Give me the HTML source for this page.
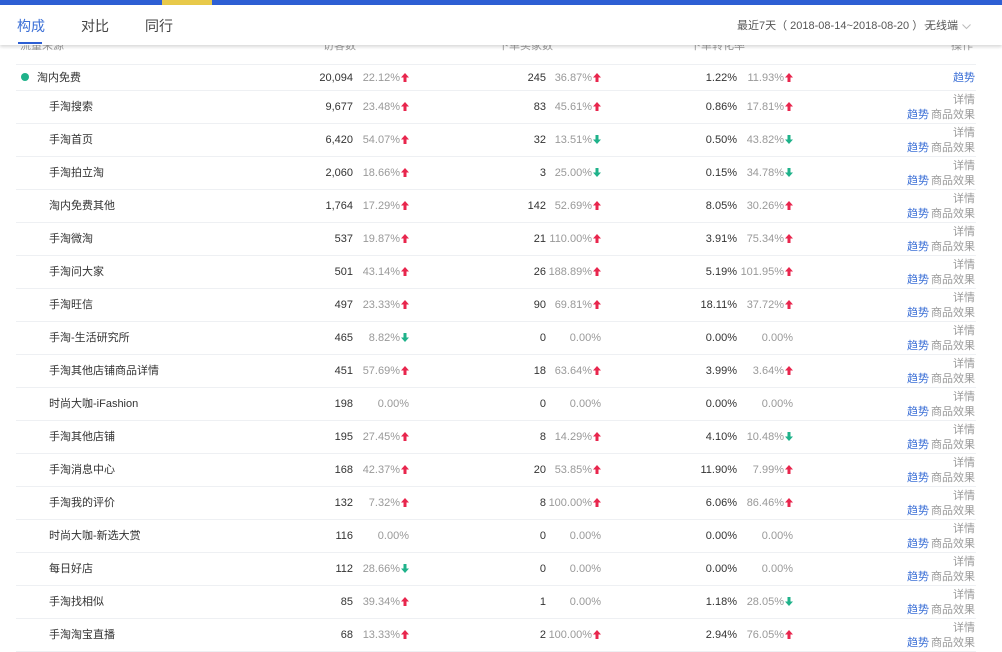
<!DOCTYPE html><html><head><meta charset="utf-8"><style>
body{margin:0;width:1002px;height:638px;overflow:hidden;background:#fff;font-family:"Liberation Sans","Noto Sans CJK SC",sans-serif;font-size:11px;color:#333;position:relative}
.a{position:absolute;white-space:nowrap;line-height:14px}
.r{text-align:right}
.p{color:#999}
.line{position:absolute;left:16px;width:960px;height:1px;background:#eef0f3}
.blue{color:#3b6fd6}
.g{color:#999}
svg{vertical-align:-1px;margin-left:1px}
</style></head><body>
<div class="a" style="left:0;top:0;width:1002px;height:5px;background:#2d5fd4"></div>
<div class="a" style="left:162px;top:0;width:50px;height:5px;background:#e8c94a"></div>
<div class="a" style="left:20px;top:39px;color:#999;font-size:11px">流量来源</div>
<div class="a" style="left:323px;top:39px;color:#999">访客数</div>
<div class="a" style="left:498px;top:39px;color:#999">下单买家数</div>
<div class="a" style="left:690px;top:39px;color:#999">下单转化率</div>
<div class="a" style="left:951px;top:39px;color:#999">操作</div>
<div class="a" style="left:0;top:5px;width:1002px;height:40px;background:#fff;box-shadow:0 2px 3px rgba(0,0,0,.15)"></div>
<div class="a" style="left:17px;top:17px;font-size:14px;line-height:18px;color:#3b6fd6">构成</div>
<div class="a" style="left:81px;top:17px;font-size:14px;line-height:18px;color:#444">对比</div>
<div class="a" style="left:145px;top:17px;font-size:14px;line-height:18px;color:#444">同行</div>
<div class="a" style="left:18px;top:42px;width:24px;height:2px;background:#2d5fd4"></div>
<div class="a" style="left:737px;top:19px;color:#555">最近7天（ 2018-08-14~2018-08-20 ）<svg width="9" height="6" viewBox="0 0 9 6"><path d="M0.5 0.5L4.5 4.5L8.5 0.5" stroke="#bbb" fill="none"/></svg></div>
<div class="a" style="left:925px;top:19px;color:#555">无线端 <svg width="9" height="6" viewBox="0 0 9 6"><path d="M0.5 0.5L4.5 4.5L8.5 0.5" stroke="#bbb" fill="none"/></svg></div>
<div id="t"></div>
<script>
var d=[["淘内免费","20,094","22.12%",1,"245","36.87%",1,"1.22%","11.93%",1],
["手淘搜索","9,677","23.48%",1,"83","45.61%",1,"0.86%","17.81%",1],
["手淘首页","6,420","54.07%",1,"32","13.51%",2,"0.50%","43.82%",2],
["手淘拍立淘","2,060","18.66%",1,"3","25.00%",2,"0.15%","34.78%",2],
["淘内免费其他","1,764","17.29%",1,"142","52.69%",1,"8.05%","30.26%",1],
["手淘微淘","537","19.87%",1,"21","110.00%",1,"3.91%","75.34%",1],
["手淘问大家","501","43.14%",1,"26","188.89%",1,"5.19%","101.95%",1],
["手淘旺信","497","23.33%",1,"90","69.81%",1,"18.11%","37.72%",1],
["手淘-生活研究所","465","8.82%",2,"0","0.00%",0,"0.00%","0.00%",0],
["手淘其他店铺商品详情","451","57.69%",1,"18","63.64%",1,"3.99%","3.64%",1],
["时尚大咖-iFashion","198","0.00%",0,"0","0.00%",0,"0.00%","0.00%",0],
["手淘其他店铺","195","27.45%",1,"8","14.29%",1,"4.10%","10.48%",2],
["手淘消息中心","168","42.37%",1,"20","53.85%",1,"11.90%","7.99%",1],
["手淘我的评价","132","7.32%",1,"8","100.00%",1,"6.06%","86.46%",1],
["时尚大咖-新选大赏","116","0.00%",0,"0","0.00%",0,"0.00%","0.00%",0],
["每日好店","112","28.66%",2,"0","0.00%",0,"0.00%","0.00%",0],
["手淘找相似","85","39.34%",1,"1","0.00%",0,"1.18%","28.05%",2],
["手淘淘宝直播","68","13.33%",1,"2","100.00%",1,"2.94%","76.05%",1]];
var UP='<svg width="8" height="9" viewBox="0 0 8 9"><path d="M4 0L8 4.5H5.5V9H2.5V4.5H0Z" fill="#e8264d"/></svg>';
var DN='<svg width="8" height="9" viewBox="0 0 8 9"><path d="M4 9L8 4.5H5.5V0H2.5V4.5H0Z" fill="#1fb28a"/></svg>';
var h='<div class="line" style="top:64px"></div>';
d.forEach(function(r,i){
 var c=i==0?77:106+33*(i-1), t=c-6;
 h+='<div class="line" style="top:'+(i==0?90:c+17)+'px"></div>';
 if(i==0){h+='<div class="a" style="left:21px;top:'+(c-4)+'px;width:8px;height:8px;border-radius:50%;background:#1fb28a"></div><div class="a" style="left:37px;top:'+t+'px">'+r[0]+'</div>';}
 else h+='<div class="a" style="left:49px;top:'+t+'px">'+r[0]+'</div>';
 function cell(x,tx){return '<div class="a r" style="right:'+(1002-x)+'px;top:'+t+'px">'+tx+'</div>'}
 function pc(x,tx,k){return '<div class="a r p" style="right:'+(1002-x)+'px;top:'+t+'px">'+tx+(k==1?UP:k==2?DN:'')+'</div>'}
 h+=cell(353,r[1])+pc(409,r[2],r[3])+cell(546,r[4])+pc(601,r[5],r[6])+cell(737,r[7])+pc(793,r[8],r[9]);
 if(i==0)h+='<div class="a blue" style="left:953px;top:'+t+'px">趋势</div>';
 else h+='<div class="a g" style="left:953px;top:'+(c-13)+'px">详情</div><div class="a blue" style="left:907px;top:'+(c+2)+'px">趋势</div><div class="a g" style="left:931px;top:'+(c+2)+'px">商品效果</div>';
});
document.getElementById('t').innerHTML=h;
</script>
</body></html>
